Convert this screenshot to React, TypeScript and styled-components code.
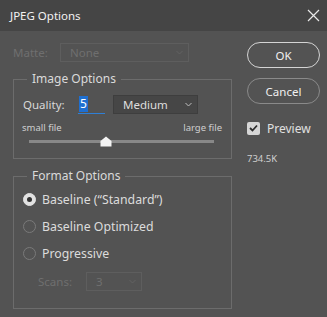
import React, { useState } from "react";
import styled, { createGlobalStyle } from "styled-components";

const GlobalStyle = createGlobalStyle`
  html, body {
    margin: 0;
    padding: 0;
    background: #535353;
  }
  body {
    font-family: "Noto Sans", "Open Sans", "Liberation Sans", sans-serif;
  }
`;

const Window = styled.div`
  width: 327px;
  height: 317px;
  background: #535353;
  display: flex;
  flex-direction: column;
  color: #d8d8d8;
  font-size: 11.5px;
  overflow: hidden;
`;

const TitleBar = styled.div`
  height: 31px;
  flex: none;
  background: #454545;
  display: flex;
  align-items: center;
  justify-content: space-between;
  padding: 0 7px 0 10px;
  color: #f2f2f2;
  font-size: 11.5px;
`;

const CloseIcon = styled.svg`
  width: 13px;
  height: 13px;
  display: block;
`;

const Body = styled.div`
  display: flex;
  padding: 11px 7px 0 13px;
`;

const LeftColumn = styled.div`
  width: 219px;
  display: flex;
  flex-direction: column;
`;

const RightColumn = styled.div`
  margin-left: 15px;
  width: 73px;
  display: flex;
  flex-direction: column;
`;

const Row = styled.div<{ $indent?: number; $height?: number }>`
  display: flex;
  align-items: center;
  height: ${(p) => p.$height ?? 20}px;
  padding-left: ${(p) => p.$indent ?? 0}px;
`;

const Label = styled.span<{ $width: number; $disabled?: boolean }>`
  width: ${(p) => p.$width}px;
  flex: none;
  color: ${(p) => (p.$disabled ? "#6f6f6f" : "#d8d8d8")};
`;

const Select = styled.div<{ $width: number; $disabled?: boolean }>`
  width: ${(p) => p.$width}px;
  height: 19px;
  box-sizing: border-box;
  display: flex;
  align-items: center;
  justify-content: space-between;
  padding: 0 5px 0 9px;
  border: 1px solid ${(p) => (p.$disabled ? "#5e5e5e" : "#3e3e3e")};
  background: ${(p) => (p.$disabled ? "#535353" : "#464646")};
  color: ${(p) => (p.$disabled ? "#6f6f6f" : "#dedede")};
  font-size: 11.5px;
`;

const Chevron = styled.svg`
  width: 7px;
  height: 5px;
  display: block;
`;

const Group = styled.fieldset<{ $top: number; $bottom: number }>`
  margin: ${(p) => p.$top}px 0 0 0;
  padding: 0 10px ${(p) => p.$bottom}px 9px;
  border: 1px solid #6c6c6c;
  min-width: 0;
`;

const Legend = styled.legend`
  margin-left: 4px;
  padding: 0 5px;
  font-size: 12px;
  line-height: 16px;
  color: #dadada;
`;

const QualityInput = styled.div`
  width: 27px;
  height: 19px;
  box-sizing: border-box;
  border-bottom: 1px solid #2f7fd6;
  padding-left: 1px;
  display: flex;
  align-items: center;
  font-size: 12px;
  margin-right: 8px;
`;

const Selected = styled.span`
  background: #1f6fd0;
  color: #ffffff;
  padding: 0 1px;
  line-height: 16px;
`;

const ScaleLabels = styled.div`
  display: flex;
  justify-content: space-between;
  margin: 7px -1px 0 -1px;
  font-size: 9.5px;
  color: #cfcfcf;
  line-height: 13px;
`;

const Track = styled.div`
  position: relative;
  height: 3px;
  margin: 6px 7px 0 6px;
  background: #888888;
`;

const Thumb = styled.svg`
  position: absolute;
  top: -4px;
  width: 12px;
  height: 11px;
  margin-left: -6px;
`;

const RadioRow = styled.label`
  display: flex;
  align-items: center;
  height: 27px;
  font-size: 12.3px;
  color: #dcdcdc;
`;

const RadioCircle = styled.span<{ $checked?: boolean }>`
  width: 13px;
  height: 13px;
  box-sizing: border-box;
  border-radius: 50%;
  margin: 0 6px 0 0;
  flex: none;
  display: flex;
  align-items: center;
  justify-content: center;
  border: 1px solid ${(p) => (p.$checked ? "#e2e2e2" : "#7a7a7a")};
  background: ${(p) => (p.$checked ? "#e2e2e2" : "transparent")};
  &::after {
    content: "";
    display: ${(p) => (p.$checked ? "block" : "none")};
    width: 5px;
    height: 5px;
    border-radius: 50%;
    background: #333333;
  }
`;

const PillButton = styled.button<{ $primary?: boolean }>`
  width: 73px;
  height: 26px;
  box-sizing: border-box;
  border-radius: 13px;
  border: ${(p) => (p.$primary ? "1.5px solid #d4d4d4" : "1px solid #8a8a8a")};
  background: transparent;
  color: #f0f0f0;
  font-family: inherit;
  font-size: 11.5px;
  padding: 0;
  margin-bottom: 10px;
`;

const CheckRow = styled.label`
  display: flex;
  align-items: center;
  margin-top: 7px;
  height: 14px;
  font-size: 12px;
  color: #e0e0e0;
`;

const CheckBox = styled.span`
  width: 13px;
  height: 13px;
  border-radius: 2px;
  background: #d6d6d6;
  margin-right: 7px;
  display: flex;
  align-items: center;
  justify-content: center;
`;

const SizeText = styled.div`
  margin-top: 17px;
  font-size: 9.5px;
  color: #cfcfcf;
`;

const Arrow: React.FC<{ disabled?: boolean }> = ({ disabled }) => (
  <Chevron viewBox="0 0 7 5">
    <path d="M0.5 1 L3.5 4 L6.5 1" fill="none" stroke={disabled ? "#626262" : "#bdbdbd"} strokeWidth="1" />
  </Chevron>
);

const App: React.FC = () => {
  const [quality] = useState(5);
  const [format, setFormat] = useState("baseline");
  const pct = (quality / 12) * 100;

  const formats = [
    { id: "baseline", label: "Baseline (\u201CStandard\u201D)" },
    { id: "optimized", label: "Baseline Optimized" },
    { id: "progressive", label: "Progressive" },
  ];

  return (
    <Window>
      <GlobalStyle />
      <TitleBar>
        <span>JPEG Options</span>
        <CloseIcon viewBox="0 0 13 13">
          <path d="M1 1 L12 12 M12 1 L1 12" stroke="#e8e8e8" strokeWidth="1.2" />
        </CloseIcon>
      </TitleBar>
      <Body>
        <LeftColumn>
          <Row>
            <Label $width={47} $disabled>Matte:</Label>
            <Select $width={129} $disabled>
              <span>None</span>
              <Arrow disabled />
            </Select>
          </Row>

          <Group $top={9} $bottom={15}>
            <Legend>Image Options</Legend>
            <Row $height={19} style={{ marginTop: 8 }}>
              <Label $width={55}>Quality:</Label>
              <QualityInput>
                <Selected>{quality}</Selected>
              </QualityInput>
              <Select $width={85}>
                <span>Medium</span>
                <Arrow />
              </Select>
            </Row>
            <ScaleLabels>
              <span>small file</span>
              <span>large file</span>
            </ScaleLabels>
            <Track>
              <Thumb viewBox="0 0 12 11" style={{ left: `${pct}%` }}>
                <path d="M6 0.5 L11.5 5 L11.5 10.5 L0.5 10.5 L0.5 5 Z" fill="#f4f4f4" />
              </Thumb>
            </Track>
          </Group>

          <Group $top={9} $bottom={12}>
            <Legend>Format Options</Legend>
            <div style={{ marginTop: 2 }}>
              {formats.map((f) => (
                <RadioRow key={f.id} onClick={() => setFormat(f.id)}>
                  <RadioCircle $checked={format === f.id} />
                  {f.label}
                </RadioRow>
              ))}
            </div>
            <Row $height={29} $indent={15}>
              <Label $width={48} $disabled>Scans:</Label>
              <Select $width={56} $disabled>
                <span>3</span>
                <Arrow disabled />
              </Select>
            </Row>
          </Group>
        </LeftColumn>

        <RightColumn>
          <PillButton $primary>OK</PillButton>
          <PillButton>Cancel</PillButton>
          <CheckRow>
            <CheckBox>
              <svg width="9" height="8" viewBox="0 0 9 8">
                <path d="M1 4 L3.5 6.5 L8 1.5" fill="none" stroke="#2e2e2e" strokeWidth="1.8" />
              </svg>
            </CheckBox>
            Preview
          </CheckRow>
          <SizeText>734.5K</SizeText>
        </RightColumn>
      </Body>
    </Window>
  );
};

export default App;
